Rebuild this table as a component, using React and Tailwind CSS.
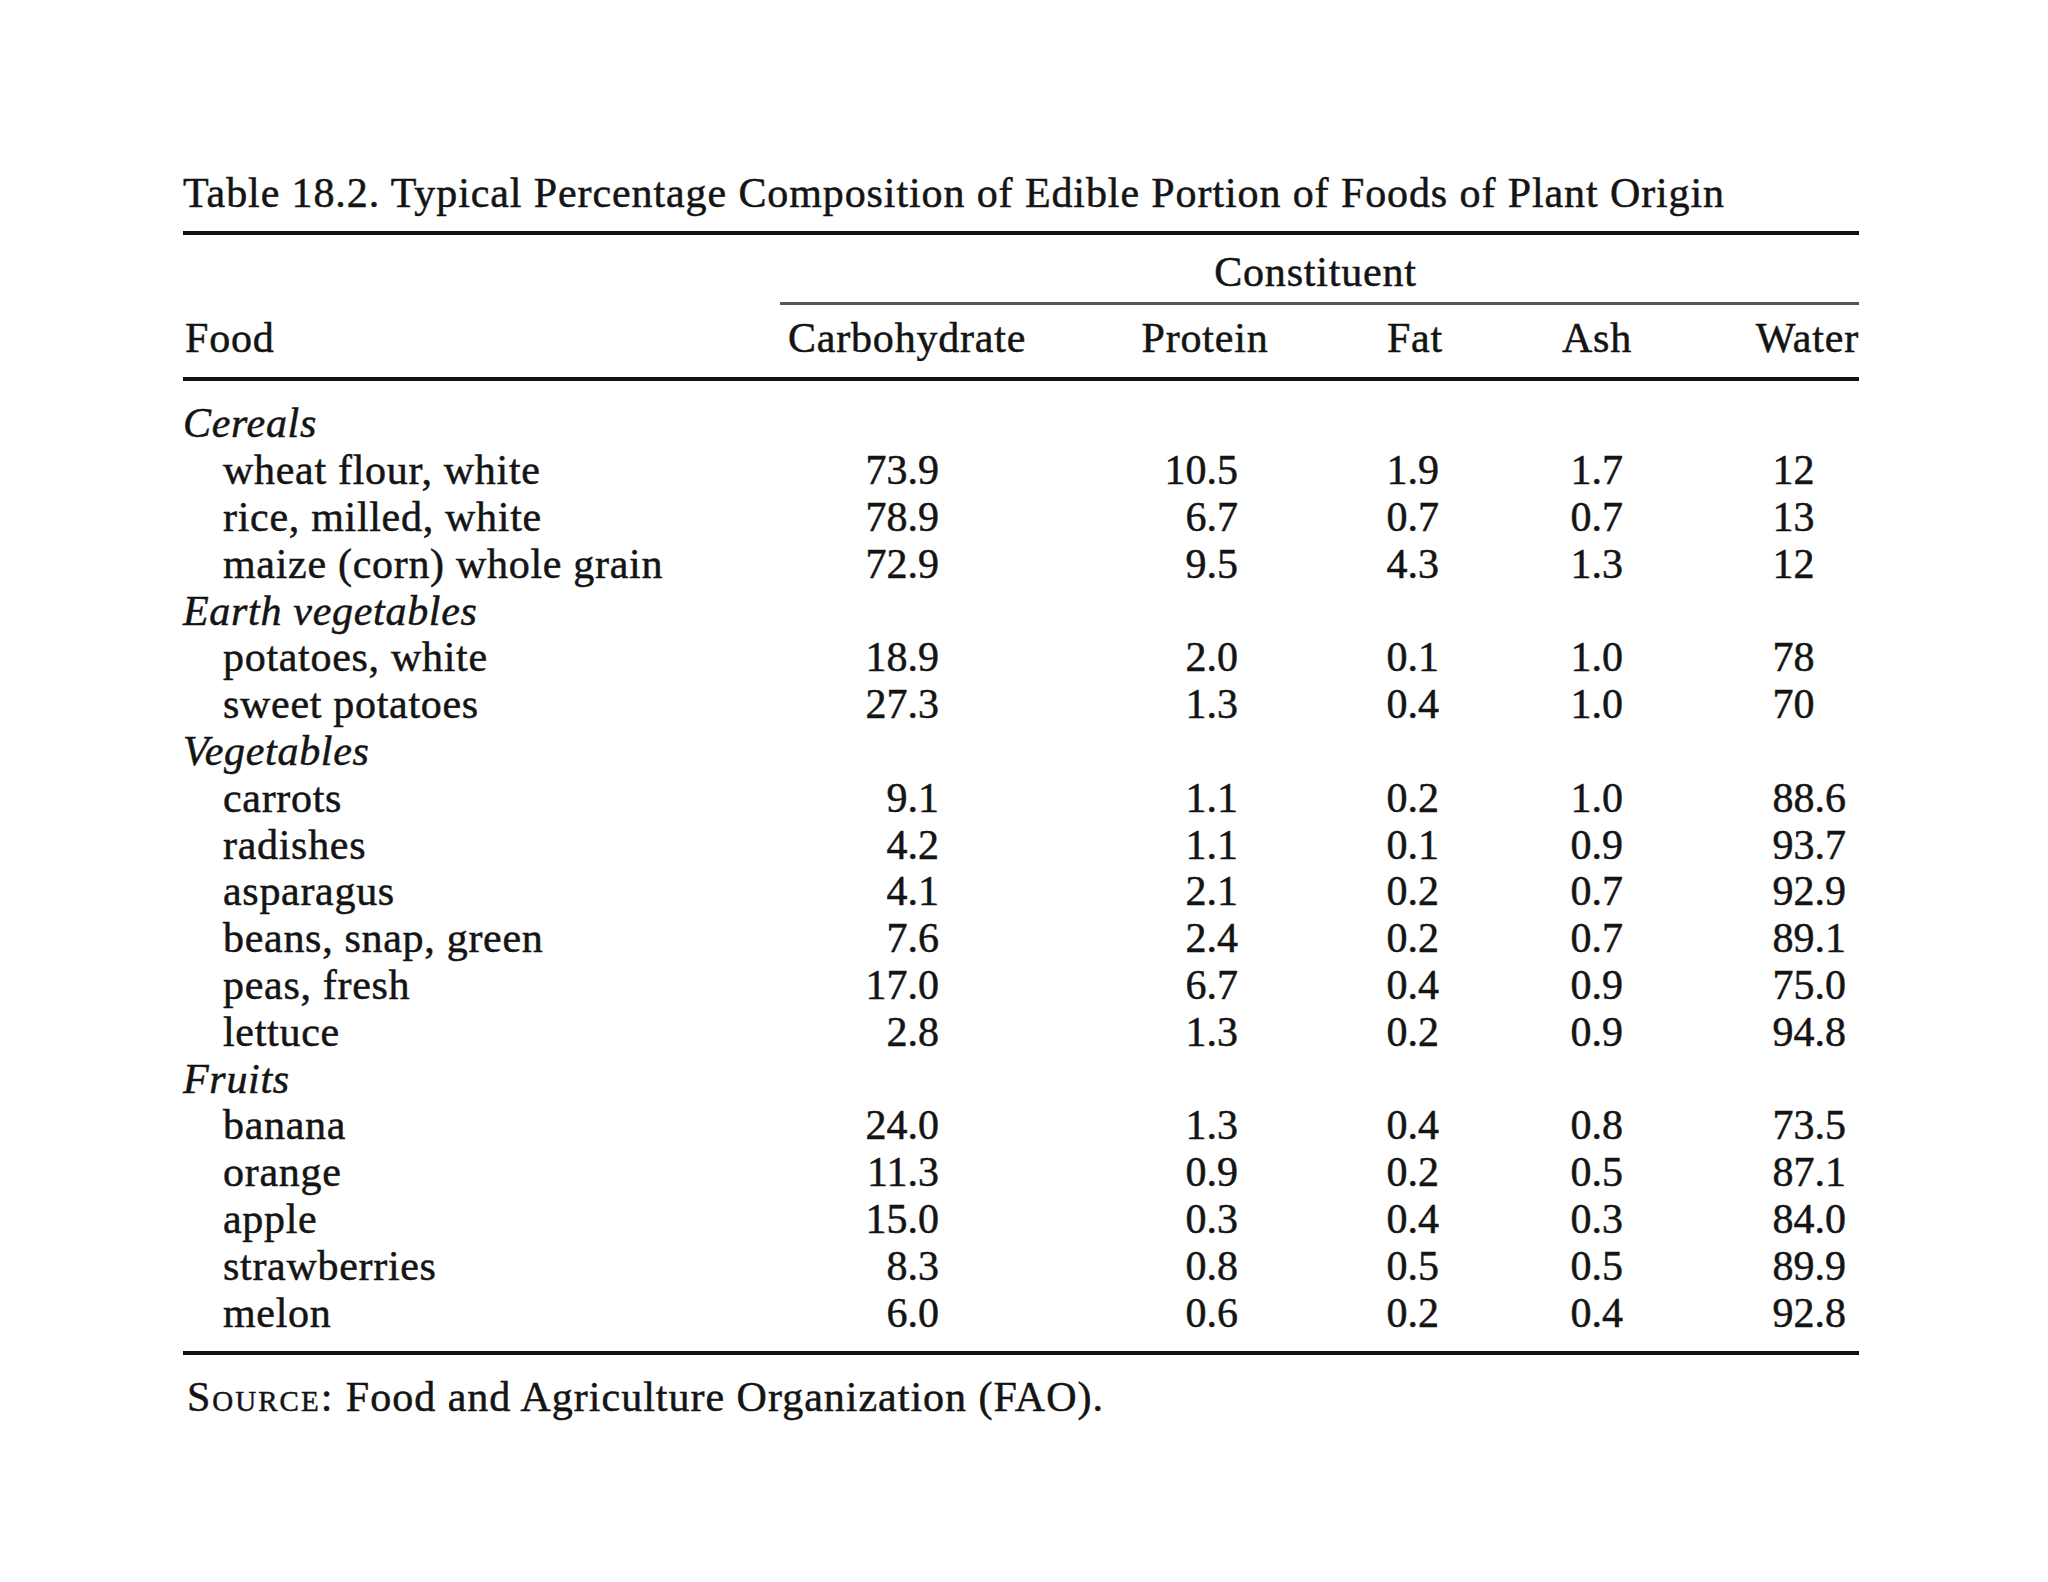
const groups = [
  {
    name: "Cereals",
    items: [
      ["wheat flour, white", "73.9", "10.5", "1.9", "1.7", "12"],
      ["rice, milled, white", "78.9", "6.7", "0.7", "0.7", "13"],
      ["maize (corn) whole grain", "72.9", "9.5", "4.3", "1.3", "12"],
    ],
  },
  {
    name: "Earth vegetables",
    items: [
      ["potatoes, white", "18.9", "2.0", "0.1", "1.0", "78"],
      ["sweet potatoes", "27.3", "1.3", "0.4", "1.0", "70"],
    ],
  },
  {
    name: "Vegetables",
    items: [
      ["carrots", "9.1", "1.1", "0.2", "1.0", "88.6"],
      ["radishes", "4.2", "1.1", "0.1", "0.9", "93.7"],
      ["asparagus", "4.1", "2.1", "0.2", "0.7", "92.9"],
      ["beans, snap, green", "7.6", "2.4", "0.2", "0.7", "89.1"],
      ["peas, fresh", "17.0", "6.7", "0.4", "0.9", "75.0"],
      ["lettuce", "2.8", "1.3", "0.2", "0.9", "94.8"],
    ],
  },
  {
    name: "Fruits",
    items: [
      ["banana", "24.0", "1.3", "0.4", "0.8", "73.5"],
      ["orange", "11.3", "0.9", "0.2", "0.5", "87.1"],
      ["apple", "15.0", "0.3", "0.4", "0.3", "84.0"],
      ["strawberries", "8.3", "0.8", "0.5", "0.5", "89.9"],
      ["melon", "6.0", "0.6", "0.2", "0.4", "92.8"],
    ],
  },
];

const grid = "grid grid-cols-[597px_230px_300px_200px_184px_165px]";

function DataRow({ row }) {
  const [food, carb, protein, fat, ash, water] = row;
  return (
    <div className={grid}>
      <div className="pl-[40px] tracking-[0.7px]">{food}</div>
      <div className="text-right pr-[71px]">{carb}</div>
      <div className="text-right pr-[72px]">{protein}</div>
      <div className="text-right pr-[71px]">{fat}</div>
      <div className="text-right pr-[71px]">{ash}</div>
      <div className="text-right pr-[13px]">
        {water}
        {!water.includes(".") && <span className="invisible">.0</span>}
      </div>
    </div>
  );
}

export default function App() {
  return (
    <div className="min-h-screen bg-white text-[#141414] font-['Liberation_Serif',serif] text-[42px] leading-[46.8px] [-webkit-text-stroke:0.5px_#141414]">
      <div className="pl-[183px] pt-[170px]">
        <div className="w-[1676px]">
          <div className="tracking-[0.9px]">
            Table 18.2. Typical Percentage Composition of Edible Portion of Foods of Plant Origin
          </div>
          <div className="mt-[14px] h-[4px] bg-[#111]" />

          <div className={`${grid} mt-[14px]`}>
            <div />
            <div className="col-span-5 text-center pr-[8px] tracking-[0.8px]">Constituent</div>
          </div>
          <div className={grid}>
            <div />
            <div className="col-span-5 mt-[6px] h-[3px] bg-[#555]" />
          </div>

          <div className={`${grid} mt-[10px] tracking-[0.8px]`}>
            <div className="pl-[2px]">Food</div>
            <div className="text-center pl-[8px]">Carbohydrate</div>
            <div className="text-center pl-[90px]">Protein</div>
            <div className="text-center pl-[10px]">Fat</div>
            <div className="text-center pr-[10px]">Ash</div>
            <div className="text-right">Water</div>
          </div>
          <div className="mt-[16px] h-[4px] bg-[#111]" />

          <div className="mt-[19px]">
            {groups.map((g) => (
              <div key={g.name}>
                <div className="italic tracking-[0.7px]">{g.name}</div>
                {g.items.map((row) => (
                  <DataRow key={row[0]} row={row} />
                ))}
              </div>
            ))}
          </div>

          <div className="mt-[15px] h-[4px] bg-[#111]" />
          <div className="mt-[19px] pl-[4px] tracking-[1px]">
            <span className="[font-variant:small-caps] tracking-[2px]">Source:</span> Food and Agriculture
            Organization (FAO).
          </div>
        </div>
      </div>
    </div>
  );
}
